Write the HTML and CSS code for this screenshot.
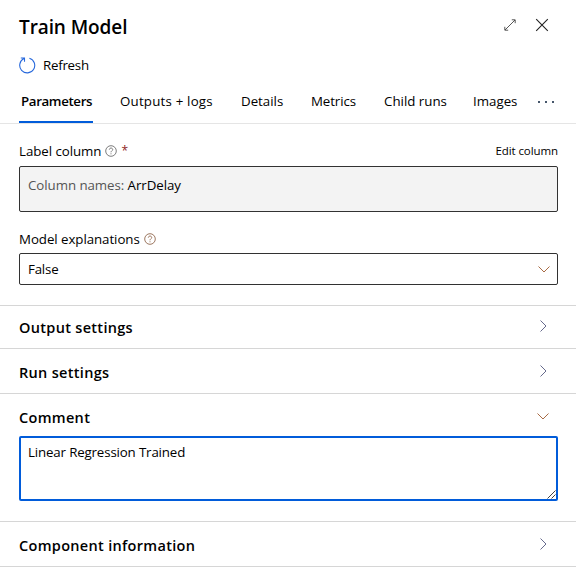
FILE: index.html
```html
<!DOCTYPE html>
<html lang="en">
<head>
<meta charset="utf-8">
<title>Train Model</title>
<link rel="stylesheet" href="styles.css">
</head>
<body>
<main class="panel">
  <header class="header">
    <h1 class="title">Train Model</h1>
    <svg class="expand" width="12" height="12" viewBox="0 0 12 12"><path d="M1 11L11 1M7.8 .8H11.2V4.2M.8 7.8V11.2H4.2"/></svg>
    <svg class="close" width="14" height="14" viewBox="0 0 14 14"><path d="M1.2 1.2L12.8 12.8M12.8 1.2L1.2 12.8"/></svg>
  </header>
  <button class="refresh">
    <svg width="17" height="17" viewBox="0 0 17 17"><path d="M10.4 1.2A7.5 7.5 0 1 1 5 1.6M1.8 1H5.5V4.8"/></svg>
    <span class="t-refresh">Refresh</span>
  </button>
  <nav class="tabs">
    <a class="tab active"><span>Parameters</span></a>
    <a class="tab"><span class="t-outputs">Outputs + logs</span></a>
    <a class="tab"><span>Details</span></a>
    <a class="tab"><span class="t-metrics">Metrics</span></a>
    <a class="tab"><span>Child runs</span></a>
    <a class="tab"><span>Images</span></a>
    <svg class="more" width="16" height="4" viewBox="0 0 16 4"><path d="M0 1h2v2H0zM7 1h2v2H7zM14 1h2v2h-2z"/></svg>
  </nav>
  <section class="fields">
    <div class="label-row first">
      <span class="l-column">Label column</span>
      <svg class="help" width="12" height="12" viewBox="0 0 12 12"><circle cx="6" cy="6" r="5.3"/><path d="M4.3 4.7C4.3 2.5 7.7 2.5 7.7 4.6C7.7 5.8 6 5.8 6 7.3M6 8.3V9.3"/></svg>
      <span class="required">*</span>
      <span class="edit">Edit column</span>
    </div>
    <div class="column-box"><span class="muted">Column names:</span> ArrDelay</div>
    <div class="label-row second">
      <span class="l-model">Model explanations</span>
      <svg class="help warm" width="12" height="12" viewBox="0 0 12 12"><circle cx="6" cy="6" r="5.3"/><path d="M4.3 4.7C4.3 2.5 7.7 2.5 7.7 4.6C7.7 5.8 6 5.8 6 7.3M6 8.3V9.3"/></svg>
    </div>
    <div class="select"><span>False</span><svg class="down" width="12" height="7" viewBox="0 0 12 7"><path d="M.5 .5L6 6L11.5 .5"/></svg></div>
  </section>
  <section class="section output"><h2>Output settings</h2><svg class="right" width="7" height="12" viewBox="0 0 7 12"><path d="M.5 .5L6 6L.5 11.5"/></svg></section>
  <section class="section run"><h2>Run settings</h2><svg class="right" width="7" height="12" viewBox="0 0 7 12"><path d="M.5 .5L6 6L.5 11.5"/></svg></section>
  <section class="comment">
    <div class="comment-head"><h2>Comment</h2><svg class="down" width="12" height="7" viewBox="0 0 12 7"><path d="M.5 .5L6 6L11.5 .5"/></svg></div>
    <div class="textarea"><span>Linear Regression Trained</span><svg class="grip" width="9" height="9" viewBox="0 0 9 9"><path d="M.5 8.5L8.5 .5M4.5 8.5L8.5 4.5"/></svg></div>
  </section>
  <section class="section last"><h2>Component information</h2><svg class="right" width="7" height="12" viewBox="0 0 7 12"><path d="M.5 .5L6 6L.5 11.5"/></svg></section>
</main>
</body>
</html>
```
FILE: styles.css
```css
* { box-sizing: border-box; }
body { margin: 0; background: #fff; color: #000; font: 13.3px/20px "Open Sans", "Noto Sans", sans-serif; }
svg { display: block; flex: none; fill: none; stroke: #444; stroke-width: 1; }
h1, h2 { margin: 0; font-weight: 600; white-space: nowrap; }
span { white-space: nowrap; }
.panel { width: 576px; height: 578px; overflow: hidden; }
.header { display: flex; align-items: center; height: 50px; padding: 3px 27px 0 19px; }
.title { flex: 1; font-size: 19px; line-height: 28px; letter-spacing: -.1px; }
.expand { margin: -3px 19px 0 0; stroke-width: .9; }
.close { margin-top: -3px; stroke: #222; stroke-width: 1.1; }
.refresh { display: flex; align-items: center; gap: 7px; height: 30px; padding: 0 0 0 19px; border: 0; background: none; color: inherit; font: inherit; }
.refresh svg { stroke: #2869dc; stroke-width: 1.1; }
.t-refresh { letter-spacing: -.25px; }
.tabs { display: grid; grid-template-columns: 101px 121px 70px 73px 89px 65px 16px; height: 44px; padding-left: 19px; border-bottom: 1px solid #e5e5e5; }
.tab { padding-top: 11px; }
.active { width: 74px; height: 43px; padding-left: 2px; border-bottom: 2px solid #015cda; font-weight: 600; letter-spacing: -.37px; }
.t-outputs { letter-spacing: .2px; }
.t-metrics { letter-spacing: -.1px; }
.more { margin-top: 20px; fill: #46566b; stroke: none; }
.fields { height: 181px; padding: 17px 18px 0 19px; }
.label-row { display: flex; align-items: center; height: 20px; }
.l-column, .l-model { letter-spacing: -.06px; }
.help { margin-left: 4px; stroke: #666; stroke-width: .85; }
.warm { stroke: #8b6045; }
.required { margin-left: 4px; color: #8f2424; font-size: 12px; }
.edit { margin-left: auto; font-size: 11.5px; letter-spacing: -.08px; }
.column-box { height: 46px; margin-top: 5px; padding: 8px; border: 1px solid #323232; border-radius: 2px; background: #f3f3f3; letter-spacing: -.06px; white-space: nowrap; }
.muted { color: #555; }
.second { margin-top: 17px; }
.select { display: flex; align-items: center; justify-content: space-between; height: 32px; margin-top: 4px; padding: 0 7px 0 8px; border: 1px solid #323232; border-radius: 2px; letter-spacing: -.2px; }
.down { stroke: #a86b45; }
.section { display: flex; align-items: center; justify-content: space-between; height: 45px; padding: 3px 29px 0 19px; border-top: 1px solid #d6d6d6; }
.section.output { height: 43px; padding-top: 2px; }
h2 { font-size: 14.5px; line-height: 22px; letter-spacing: .31px; }
.right { margin-top: -4px; stroke: #666a8c; }
.comment { height: 128px; padding: 0 18px 0 19px; border-top: 1px solid #d6d6d6; }
.comment-head { display: flex; align-items: center; justify-content: space-between; height: 42px; padding: 5px 9px 0 0; }
.comment-head .down { margin-top: -3px; }
.textarea { position: relative; height: 65px; padding: 4px 7px; border: 2px solid #015cda; border-radius: 2px; letter-spacing: -.15px; }
.grip { position: absolute; right: 0; bottom: 0; stroke: #444; }
.last { height: 46px; border-bottom: 1px solid #d6d6d6; }
```
